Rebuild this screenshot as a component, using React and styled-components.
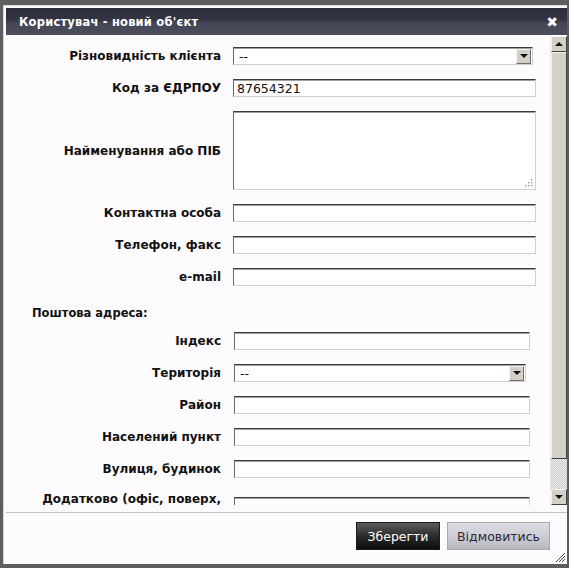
import styled, { createGlobalStyle } from "styled-components";

const GlobalStyle = createGlobalStyle`
  html, body {
    margin: 0;
    padding: 0;
    background: #5e5e5e;
    font-family: "DejaVu Sans", Verdana, sans-serif;
  }
  #root {
    padding: 5px 0 0 3px;
    height: 568px;
    box-sizing: border-box;
    overflow: hidden;
  }
`;

const fields = [
  { label: "Різновидність клієнта", kind: "select", value: "--" },
  { label: "Код за ЄДРПОУ", kind: "input", value: "87654321" },
  { label: "Найменування або ПІБ", kind: "textarea" },
  { label: "Контактна особа", kind: "input" },
  { label: "Телефон, факс", kind: "input" },
  { label: "e-mail", kind: "input" },
];

const address = [
  { label: "Індекс", kind: "input" },
  { label: "Територія", kind: "select", value: "--" },
  { label: "Район", kind: "input" },
  { label: "Населений пункт", kind: "input" },
  { label: "Вулиця, будинок", kind: "input" },
  { label: "Додатково (офіс, поверх, квартира)", kind: "input" },
];

const Field = ({ kind, value, address }) => {
  if (kind === "select") {
    return (
      <SelectBox $address={address}>
        <SelectText>{value}</SelectText>
        <ArrowButton>
          <Triangle />
        </ArrowButton>
      </SelectBox>
    );
  }
  if (kind === "textarea") {
    return (
      <TextAreaWrap>
        <TextArea />
        <Grip width="9" height="9" viewBox="0 0 9 9">
          <rect x="7" y="1" width="1.4" height="1.4" fill="#9a9a9a" />
          <rect x="4" y="4" width="1.4" height="1.4" fill="#9a9a9a" />
          <rect x="7" y="4" width="1.4" height="1.4" fill="#9a9a9a" />
          <rect x="1" y="7" width="1.4" height="1.4" fill="#9a9a9a" />
          <rect x="4" y="7" width="1.4" height="1.4" fill="#9a9a9a" />
          <rect x="7" y="7" width="1.4" height="1.4" fill="#9a9a9a" />
        </Grip>
      </TextAreaWrap>
    );
  }
  return <TextInput $address={address} defaultValue={value || ""} />;
};

const App = () => {
  return (
    <>
      <GlobalStyle />
      <Dialog>
        <TitleBar>
          <Title>Користувач - новий об'єкт</Title>
          <Close>✖</Close>
        </TitleBar>
        <Body>
          <Scroller>
            <Form>
              {fields.map((f) => (
                <Row key={f.label}>
                  <Label>{f.label}</Label>
                  <Field kind={f.kind} value={f.value} />
                </Row>
              ))}
              <Heading>Поштова адреса:</Heading>
              {address.map((f) => (
                <Row key={f.label}>
                  <Label>{f.label}</Label>
                  <Field kind={f.kind} value={f.value} address />
                </Row>
              ))}
            </Form>
          </Scroller>
          <ScrollBar>
            <ScrollButton>
              <Triangle $up />
            </ScrollButton>
            <Thumb />
            <Track />
            <ScrollButton>
              <Triangle />
            </ScrollButton>
          </ScrollBar>
        </Body>
        <Footer>
          <SaveButton>Зберегти</SaveButton>
          <CancelButton>Відмовитись</CancelButton>
          <ResizeGrip width="11" height="11" viewBox="0 0 11 11">
            <path d="M10 1 L1 10 M10 4 L4 10 M10 7 L7 10" stroke="#444" strokeWidth="1" />
          </ResizeGrip>
        </Footer>
      </Dialog>
    </>
  );
};

const Dialog = styled.div`
  position: relative;
  width: 564px;
  height: 559px;
  box-sizing: border-box;
  padding: 2px 0 0 2px;
  background: #fcfafc;
  border-left: 1px solid #d8d8d8;
  border-top: 1px solid #d8d8d8;
  display: flex;
  flex-direction: column;
`;

const TitleBar = styled.div`
  height: 27px;
  flex: none;
  display: flex;
  align-items: center;
  justify-content: space-between;
  padding: 0 9px 0 13px;
  background: linear-gradient(#2b2d3a 0%, #333544 45%, #444655 55%, #4c4e5c 100%);
  border-bottom: 1px solid #ffffff;
`;

const Title = styled.span`
  color: #ffffff;
  font-weight: bold;
  font-size: 11.5px;
  letter-spacing: 0.2px;
`;

const Close = styled.span`
  color: #ffffff;
  font-size: 14px;
  font-weight: bold;
`;

const Body = styled.div`
  display: flex;
  height: 469px;
  flex: none;
`;

const Scroller = styled.div`
  flex: 1;
  overflow: hidden;
  background: #fdfbfd;
`;

const Form = styled.div`
  display: flex;
  flex-direction: column;
  gap: 14px;
  padding-top: 11px;
`;

const Row = styled.div`
  display: flex;
  align-items: center;
  gap: 12px;
`;

const Label = styled.div`
  width: 215px;
  flex: none;
  text-align: right;
  font-weight: bold;
  font-size: 12px;
  line-height: 14px;
  color: #111;
`;

const Heading = styled.div`
  font-weight: bold;
  font-size: 11.5px;
  line-height: 14px;
  color: #111;
  padding-left: 26px;
  margin: 6px 0 -2px;
`;

const boxBorder = `
  box-sizing: border-box;
  border: 1px solid;
  border-color: #3c3c3c #d0d0d0 #d0d0d0 #6a6a6a;
  box-shadow: inset 0 1px 0 #a0a0a0;
  background: #ffffff;
`;

const TextInput = styled.input`
  ${boxBorder}
  width: ${(p) => (p.$address ? "296px" : "303px")};
  margin-left: ${(p) => (p.$address ? "1px" : "0")};
  height: 18px;
  padding: 1px 3px 0;
  font-family: "DejaVu Sans", Verdana, sans-serif;
  font-size: 12.5px;
  color: #111;
  outline: none;
`;

const SelectBox = styled.div`
  ${boxBorder}
  width: ${(p) => (p.$address ? "292px" : "300px")};
  margin-left: ${(p) => (p.$address ? "1px" : "0")};
  height: 18px;
  display: flex;
  align-items: center;
  justify-content: space-between;
  padding: 0 1px 0 5px;
`;

const SelectText = styled.span`
  font-size: 12.5px;
  color: #111;
`;

const ArrowButton = styled.div`
  width: 15px;
  height: 15px;
  box-sizing: border-box;
  background: #d4d0c8;
  border: 1px solid;
  border-color: #f4f4f4 #6e6e6e #6e6e6e #f4f4f4;
  display: flex;
  align-items: center;
  justify-content: center;
`;

const Triangle = styled.span`
  width: 0;
  height: 0;
  border-left: 4px solid transparent;
  border-right: 4px solid transparent;
  ${(p) =>
    p.$up ? "border-bottom: 4px solid #111;" : "border-top: 4px solid #111;"}
`;

const TextAreaWrap = styled.div`
  position: relative;
  width: 303px;
  height: 79px;
`;

const TextArea = styled.textarea`
  ${boxBorder}
  width: 100%;
  height: 100%;
  resize: none;
  outline: none;
  display: block;
`;

const Grip = styled.svg`
  position: absolute;
  right: 3px;
  bottom: 3px;
`;

const ScrollBar = styled.div`
  width: 16px;
  flex: none;
  display: flex;
  flex-direction: column;
  border-left: 1px solid #e8e8e8;
`;

const ScrollButton = styled.div`
  height: 16px;
  box-sizing: border-box;
  background: #d4d0c8;
  border: 1px solid;
  border-color: #f4f4f4 #404040 #404040 #f4f4f4;
  display: flex;
  align-items: center;
  justify-content: center;
`;

const Thumb = styled.div`
  height: 407px;
  box-sizing: border-box;
  background: #d4d0c8;
  border: 1px solid;
  border-color: #f4f4f4 #404040 #404040 #f4f4f4;
`;

const Track = styled.div`
  flex: 1;
  background-color: #f0f0f0;
  background-image: linear-gradient(45deg, #c8c8c8 25%, transparent 25%, transparent 75%, #c8c8c8 75%),
    linear-gradient(45deg, #c8c8c8 25%, transparent 25%, transparent 75%, #c8c8c8 75%);
  background-size: 2px 2px;
  background-position: 0 0, 1px 1px;
`;

const Footer = styled.div`
  margin-top: 7px;
  border-top: 1px solid #c4c4c4;
  flex: 1;
  display: flex;
  justify-content: flex-end;
  align-items: flex-start;
  gap: 7px;
  padding: 9px 17px 0 0;
  background: #fdfbfd;
`;

const BaseButton = styled.button`
  height: 28px;
  font-family: "DejaVu Sans", Verdana, sans-serif;
  font-size: 12.5px;
  cursor: pointer;
  box-sizing: border-box;
`;

const SaveButton = styled(BaseButton)`
  width: 84px;
  color: #ffffff;
  border: 1px solid #1a1a1a;
  background: linear-gradient(#5c5c5c 0%, #2c2c2c 50%, #0c0c0c 100%);
`;

const CancelButton = styled(BaseButton)`
  width: 103px;
  color: #2a2a3a;
  border: 1px solid #a8a8b0;
  background: linear-gradient(#dcdce2 0%, #cdcdd5 50%, #b9b9c3 100%);
`;

const ResizeGrip = styled.svg`
  position: absolute;
  right: 1px;
  bottom: 1px;
`;

export default App;
